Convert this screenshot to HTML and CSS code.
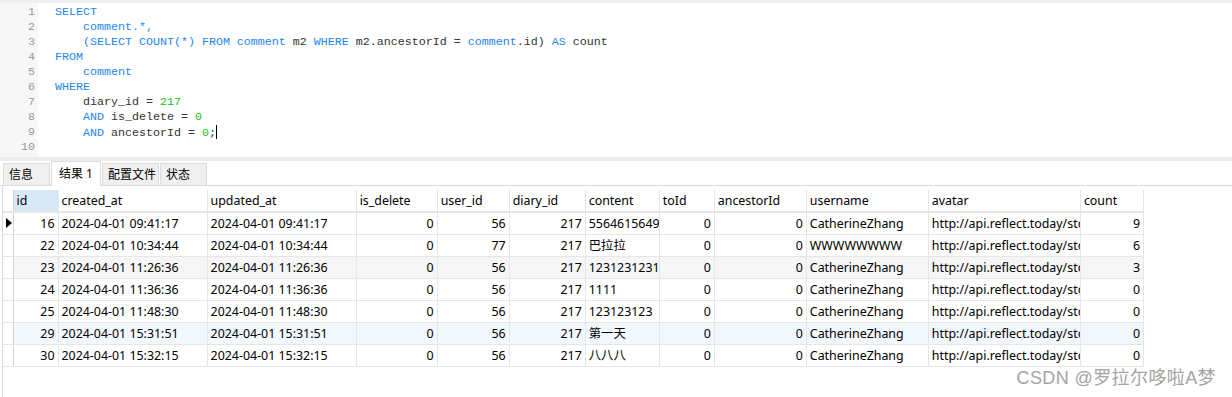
FILE: index.html
```html
<!DOCTYPE html>
<html lang="zh">
<head>
  <meta charset="UTF-8" />
  <title>Query result</title>
  <link rel="stylesheet" href="styles.css">
</head>
<body>
  <div class="topstrip"></div>

  <!-- SQL editor -->
  <div class="editor">
    <div class="gutter">
      <div>1</div><div>2</div><div>3</div><div>4</div><div>5</div>
      <div>6</div><div>7</div><div>8</div><div>9</div><div>10</div>
    </div>
    <pre class="code"><span class="kw">SELECT</span>
    <span class="kw">comment.*,</span>
    <span class="kw">(SELECT COUNT(*) FROM comment</span> m2 <span class="kw">WHERE</span> m2.ancestorId = <span class="kw">comment</span>.id) <span class="kw">AS</span> count
<span class="kw">FROM</span>
    <span class="kw">comment</span>
<span class="kw">WHERE</span>
    diary_id = <span class="num">217</span>
    <span class="kw">AND</span> is_delete = <span class="num">0</span>
    <span class="kw">AND</span> ancestorId = <span class="num">0</span>;<span class="caret"></span>
</pre>
  </div>

  <div class="splitter"></div>

  <!-- Result tabs -->
  <div class="tabs">
    <div class="tab">信息</div>
    <div class="tab active">结果 1</div>
    <div class="tab">配置文件</div>
    <div class="tab">状态</div>
  </div>

  <!-- Result grid -->
  <div class="grid-wrap">
    <table class="grid">
      <colgroup>
        <col style="width:10px"><col style="width:45px"><col style="width:149px"><col style="width:149px">
        <col style="width:81px"><col style="width:72px"><col style="width:76px"><col style="width:74px">
        <col style="width:55px"><col style="width:92px"><col style="width:122px"><col style="width:152px">
        <col style="width:63px">
      </colgroup>
      <thead>
        <tr>
          <th class="ind"></th><th class="sel">id</th><th>created_at</th><th>updated_at</th><th>is_delete</th>
          <th>user_id</th><th>diary_id</th><th>content</th><th>toId</th><th>ancestorId</th>
          <th>username</th><th>avatar</th><th>count</th>
        </tr>
      </thead>
      <tbody>
        <tr>
          <td class="ind"><span class="arrow"></span></td><td class="n">16</td><td>2024-04-01 09:41:17</td><td>2024-04-01 09:41:17</td>
          <td class="n">0</td><td class="n">56</td><td class="n">217</td><td>5564615649</td><td class="n">0</td><td class="n">0</td>
          <td>CatherineZhang</td><td>http://api.reflect.today/storage</td><td class="n">9</td>
        </tr>
        <tr>
          <td class="ind"></td><td class="n">22</td><td>2024-04-01 10:34:44</td><td>2024-04-01 10:34:44</td>
          <td class="n">0</td><td class="n">77</td><td class="n">217</td><td>巴拉拉</td><td class="n">0</td><td class="n">0</td>
          <td>WWWWWWWW</td><td>http://api.reflect.today/storage</td><td class="n">6</td>
        </tr>
        <tr class="alt">
          <td class="ind"></td><td class="n">23</td><td>2024-04-01 11:26:36</td><td>2024-04-01 11:26:36</td>
          <td class="n">0</td><td class="n">56</td><td class="n">217</td><td>1231231231231</td><td class="n">0</td><td class="n">0</td>
          <td>CatherineZhang</td><td>http://api.reflect.today/storage</td><td class="n">3</td>
        </tr>
        <tr>
          <td class="ind"></td><td class="n">24</td><td>2024-04-01 11:36:36</td><td>2024-04-01 11:36:36</td>
          <td class="n">0</td><td class="n">56</td><td class="n">217</td><td>1111</td><td class="n">0</td><td class="n">0</td>
          <td>CatherineZhang</td><td>http://api.reflect.today/storage</td><td class="n">0</td>
        </tr>
        <tr>
          <td class="ind"></td><td class="n">25</td><td>2024-04-01 11:48:30</td><td>2024-04-01 11:48:30</td>
          <td class="n">0</td><td class="n">56</td><td class="n">217</td><td>123123123</td><td class="n">0</td><td class="n">0</td>
          <td>CatherineZhang</td><td>http://api.reflect.today/storage</td><td class="n">0</td>
        </tr>
        <tr class="hover">
          <td class="ind"></td><td class="n">29</td><td>2024-04-01 15:31:51</td><td>2024-04-01 15:31:51</td>
          <td class="n">0</td><td class="n">56</td><td class="n">217</td><td>第一天</td><td class="n">0</td><td class="n">0</td>
          <td>CatherineZhang</td><td>http://api.reflect.today/storage</td><td class="n">0</td>
        </tr>
        <tr>
          <td class="ind"></td><td class="n">30</td><td>2024-04-01 15:32:15</td><td>2024-04-01 15:32:15</td>
          <td class="n">0</td><td class="n">56</td><td class="n">217</td><td>八八八</td><td class="n">0</td><td class="n">0</td>
          <td>CatherineZhang</td><td>http://api.reflect.today/storage</td><td class="n">0</td>
        </tr>
      </tbody>
    </table>
    <div class="watermark">CSDN @罗拉尔哆啦A梦</div>
  </div>
</body>
</html>
```

FILE: styles.css
```css
/* Reset */
* {
  margin: 0; padding: 0; box-sizing: border-box;
}
html, body {
  width: 100%; height: 100%;
  overflow: hidden;
  background: #fff;
  font-family: "Noto Sans", "Noto Sans CJK SC", sans-serif;
  color: #000;
}

.topstrip {
  height: 3px;
  background: #efefef;
}

/* Editor */
.editor {
  display: flex;
  height: 154px;
  font-family: "Liberation Mono", "DejaVu Sans Mono", monospace;
  font-size: 11.67px;
  line-height: 15px;
}
.gutter {
  width: 38px;
  background: #f7f7f7;
  color: #999;
  text-align: right;
  padding: 2px 3px 0 0;
}
.code {
  flex: 1;
  padding: 2px 0 0 17px;
  font: inherit;
  color: #333;
}
.kw { color: #1e86ee; }
.num { color: #19c019; }
.caret {
  display: inline-block;
  width: 1px;
  height: 14px;
  background: #000;
  vertical-align: -3px;
}

.splitter {
  height: 4px;
  background: #ececec;
}

/* Tabs */
.tabs {
  display: flex;
  align-items: flex-end;
  height: 25px;
  padding-left: 3px;
  border-bottom: 1px solid #dadada;
  font-size: 12px;
}
.tab {
  min-width: 47px;
  height: 22px;
  padding: 2px 2px 0 5px;
  background: #f0f0f0;
  border: 1px solid #dcdcdc;
  border-bottom: none;
  margin-right: 1px;
  line-height: 18px;
}
.tab.active {
  min-width: 50px;
  height: 25px;
  margin-bottom: -1px;
  background: #fff;
  padding: 3px 2px 0 7px;
}

/* Result grid */
.grid-wrap {
  position: relative;
  height: 212px;
  margin-left: 2px;
  padding-top: 4px;
  border-left: 1px solid #dcdcdc;
}
.grid {
  border-collapse: collapse;
  table-layout: fixed;
  width: 1141px;
  font-size: 12.4px;
}
.grid th, .grid td {
  height: 22px;
  border: 1px solid #e6e6e6;
  padding: 0 3px;
  white-space: nowrap;
  overflow: hidden;
  text-overflow: clip;
  font-weight: normal;
  text-align: left;
}
.grid thead th {
  border-top: none;
  border-bottom: 2px solid #e6e6e6;
}
.grid th.sel {
  background: #d7e8f7;
}
.grid .ind {
  padding: 0;
  border-left: none;
  border-right: 1px solid #d4d4d4;
}
.grid td.n {
  text-align: right;
}
.grid tr.alt td { background: #f6f6f6; }
.grid tr.hover td { background: #f2f8fd; }
.grid tr.alt td.ind, .grid tr.hover td.ind { background: #fff; }
.arrow {
  display: block;
  width: 0; height: 0;
  margin-left: 3px;
  border-top: 5px solid transparent;
  border-bottom: 5px solid transparent;
  border-left: 6px solid #000;
}

.watermark {
  position: absolute;
  right: 16px;
  bottom: 9px;
  font-family: "Liberation Sans", "Noto Sans CJK SC", sans-serif;
  font-size: 18px;
  color: #a3a3a3;
  letter-spacing: 0.4px;
}
```
